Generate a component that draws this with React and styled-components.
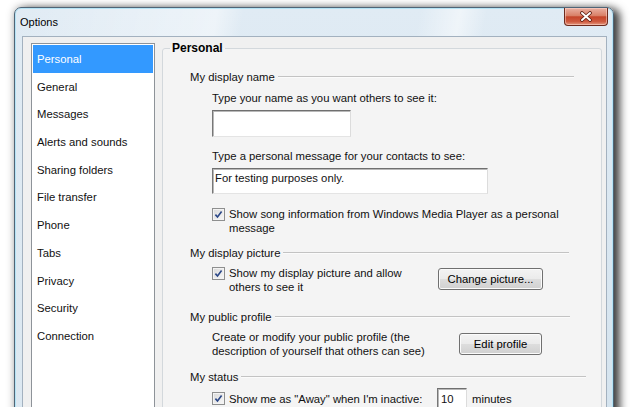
import React from "react"
import styled, { createGlobalStyle } from "styled-components"

const font = `"Liberation Sans", Arial, sans-serif`

const GlobalStyle = createGlobalStyle`
  html, body {
    margin: 0;
    background: #ffffff;
    overflow: hidden;
  }
`

const Page = styled.div`
  width: 634px;
  height: 407px;
  box-sizing: border-box;
  padding: 7px 0 0 14px;
  overflow: hidden;
  font-family: ${font};
  font-size: 11.3px;
  line-height: 14px;
  color: #111;
`

const Window = styled.div`
  width: 600px;
  height: 440px;
  box-sizing: border-box;
  display: flex;
  flex-direction: column;
  border: 1px solid #4f6577;
  border-radius: 7px 7px 0 0;
  background:
    linear-gradient(100deg,
      rgba(255,255,255,0) 0%, rgba(255,255,255,0.45) 30%, rgba(255,255,255,0) 34%,
      rgba(255,255,255,0) 60%, rgba(255,255,255,0.5) 66%, rgba(255,255,255,0) 70%),
    linear-gradient(#e0ebf4, #d4e3ee);
  box-shadow:
    inset 0 0 0 1px rgba(170, 225, 245, 0.8),
    6px 2px 8px rgba(0, 0, 0, 0.7),
    0 0 8px rgba(0, 0, 0, 0.28);
`

const TitleBar = styled.div`
  height: 28px;
  flex: none;
  display: flex;
  align-items: flex-start;
  padding: 0 5px 0 5px;
`

const Title = styled.span`
  line-height: 29px;
  font-size: 11px;
  color: #000;
`

const CloseButton = styled.div`
  margin-left: auto;
  width: 44px;
  height: 18px;
  box-sizing: border-box;
  border: 1px solid #6d2a1d;
  border-top: none;
  border-radius: 0 0 4px 4px;
  background: linear-gradient(#eab0a2 0%, #d98067 45%, #c5452a 52%, #cf5b40 80%, #e49a80 100%);
  box-shadow: inset 0 0 0 1px rgba(255, 220, 210, 0.5);
  display: flex;
  align-items: center;
  justify-content: center;
`

const Client = styled.div`
  flex: 1;
  margin: 0 6px 0 7px;
  border: 1px solid #a3b1bf;
  background: #f0f0f0;
  display: flex;
  align-items: flex-start;
  padding: 0 0 0 8px;
`

const Sidebar = styled.ul`
  list-style: none;
  margin: 6px 0 0 0;
  width: 124px;
  height: 400px;
  flex: none;
  box-sizing: border-box;
  border: 1px solid #8e9399;
  background: #fff;
  padding: 1px;
`

const NavItem = styled.li`
  height: 27.7px;
  line-height: 29px;
  padding-left: 4px;
  background: ${p => (p.$active ? "#3399ff" : "transparent")};
  color: ${p => (p.$active ? "#fff" : "#111")};
`

const Panel = styled.fieldset`
  margin: 4px 0 0 7px;
  padding: 0;
  width: 440px;
  min-width: 0;
  min-height: 420px;
  box-sizing: border-box;
  border: 1px solid #d3d8dc;
  border-radius: 3px;
  background: #f4f4f4;
`

const Legend = styled.legend`
  margin-left: 7px;
  padding: 0 2px;
  font-weight: bold;
  font-size: 12px;
  line-height: 14px;
  color: #000;
`

const SectionHeader = styled.div`
  display: flex;
  align-items: center;
  height: 14px;
  margin: ${p => p.$top}px ${p => p.$end}px 0 27px;
  white-space: nowrap;
`

const Rule = styled.span`
  flex: 1;
  margin-left: 3px;
  border-top: 1px solid #c3c3c3;
  border-bottom: 1px solid #fbfbfb;
`

const Indent = styled.div`
  margin: ${p => p.$top}px 0 0 49px;
  white-space: nowrap;
`

const Row = styled.div`
  display: flex;
  align-items: ${p => p.$align || "flex-start"};
  margin: ${p => p.$top}px 0 0 49px;
  white-space: nowrap;
`

const TextBox = styled.div`
  width: ${p => p.$w}px;
  height: ${p => p.$h}px;
  flex: none;
  box-sizing: border-box;
  background: #fff;
  border: 1px solid;
  border-color: #6f6f6f #dcdcdc #e4e4e4 #777;
  box-shadow: inset 1px 1px 0 #b8b8b8;
  padding: ${p => p.$pad || "2px 2px"};
`

const Check = styled.label`
  display: flex;
  align-items: flex-start;
  gap: 4px;
  width: ${p => (p.$w ? `${p.$w}px` : "auto")};
  flex: none;
`

const Box = styled.span`
  width: 13px;
  height: 13px;
  flex: none;
  box-sizing: border-box;
  margin-top: ${p => p.$top ?? 1}px;
  border: 1px solid #8e8f8f;
  background: linear-gradient(135deg, #d9d9d9, #f8f8f8);
  box-shadow: inset 0 0 0 1px #f3f3f3;
  display: flex;
  align-items: center;
  justify-content: center;
`

const Button = styled.button`
  width: ${p => p.$w}px;
  height: 22px;
  flex: none;
  margin: ${p => p.$top}px 0 0 0;
  padding: 0;
  font-family: ${font};
  font-size: 11.3px;
  color: #000;
  border: 1px solid #707070;
  border-radius: 3px;
  background: linear-gradient(#f3f3f3 0%, #ebebeb 48%, #dddddd 52%, #d0d0d0 100%);
  box-shadow: inset 0 0 0 1px #fbfbfb;
`

const Suffix = styled.span`
  margin-left: 5px;
`

const CheckBox = ({ top }) => (
  <Box $top={top}>
    <svg width="9" height="9" viewBox="0 0 9 9">
      <path d="M1.4 4.6 L3.5 7 L7.6 1.6" fill="none" stroke="#2b4787" strokeWidth="1.6" />
    </svg>
  </Box>
)

const items = [
  "Personal", "General", "Messages", "Alerts and sounds", "Sharing folders",
  "File transfer", "Phone", "Tabs", "Privacy", "Security", "Connection",
]

const App = () => (
  <Page>
    <GlobalStyle />
    <Window>
      <TitleBar>
        <Title>Options</Title>
        <CloseButton>
          <svg width="14" height="11" viewBox="0 0 14 11">
            <path d="M3 2 L11 9 M11 2 L3 9" stroke="#5a1c10" strokeWidth="3.6" strokeLinecap="round" />
            <path d="M3 2 L11 9 M11 2 L3 9" stroke="#ffffff" strokeWidth="2" strokeLinecap="round" />
          </svg>
        </CloseButton>
      </TitleBar>
      <Client>
        <Sidebar>
          {items.map((it, i) => (
            <NavItem key={it} $active={i === 0}>{it}</NavItem>
          ))}
        </Sidebar>
        <Panel>
          <Legend>Personal</Legend>

          <SectionHeader $top={15} $end={27}>My display name<Rule /></SectionHeader>
          <Indent $top={7}>Type your name as you want others to see it:</Indent>
          <Row $top={5}><TextBox $w={139} $h={27} /></Row>
          <Indent $top={12}>Type a personal message for your contacts to see:</Indent>
          <Row $top={5}><TextBox $w={276} $h={26}>For testing purposes only.</TextBox></Row>
          <Row $top={13}>
            <Check>
              <CheckBox />
              <span>Show song information from Windows Media Player as a personal<br />message</span>
            </Check>
          </Row>

          <SectionHeader $top={11} $end={32}>My display picture<Rule /></SectionHeader>
          <Row $top={6}>
            <Check $w={226}>
              <CheckBox />
              <span>Show my display picture and allow<br />others to see it</span>
            </Check>
            <Button $w={105} $top={2}>Change picture...</Button>
          </Row>

          <SectionHeader $top={16} $end={31}>My public profile<Rule /></SectionHeader>
          <Row $top={6}>
            <Check $w={247}>
              <span>Create or modify your public profile (the<br />description of yourself that others can see)</span>
            </Check>
            <Button $w={83} $top={3}>Edit profile</Button>
          </Row>

          <SectionHeader $top={12} $end={15}>My status<Rule /></SectionHeader>
          <Row $top={4} $align="center">
            <Check $w={225}>
              <CheckBox top={0} />
              <span>Show me as "Away" when I'm inactive:</span>
            </Check>
            <TextBox $w={30} $h={22} $pad="3px 3px">10</TextBox>
            <Suffix>minutes</Suffix>
          </Row>
        </Panel>
      </Client>
    </Window>
  </Page>
)

export default App
